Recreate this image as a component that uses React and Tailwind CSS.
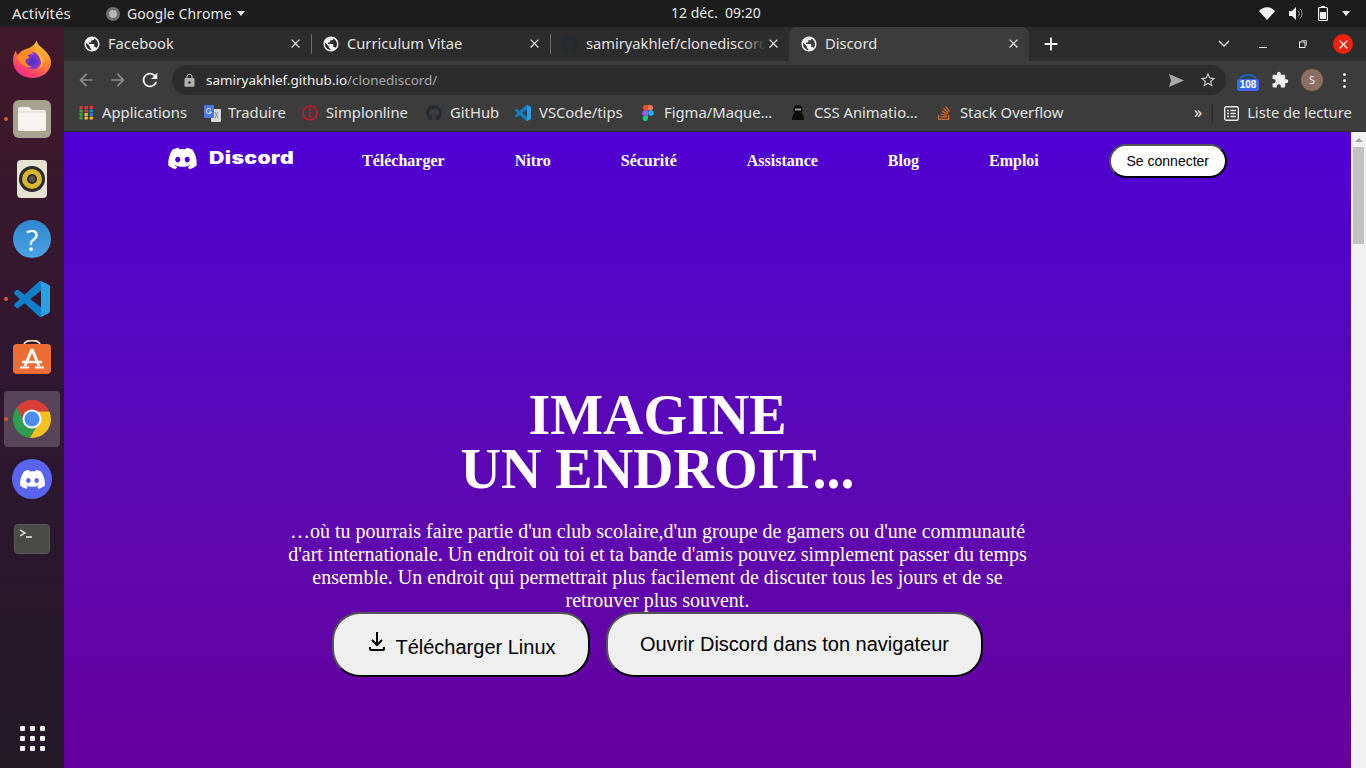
import React from 'react';
import { FaDiscord, FaGithub, FaStackOverflow } from 'react-icons/fa';
import { MdPublic, MdLock, MdStarBorder, MdClose, MdAdd, MdArrowBack, MdArrowForward, MdRefresh, MdExtension } from 'react-icons/md';

const vsCodePath = 'M23.15 2.587L18.21.21a1.494 1.494 0 0 0-1.705.29l-9.46 8.63-4.12-3.128a.999.999 0 0 0-1.276.057L.327 7.261A1 1 0 0 0 .326 8.74L3.899 12 .326 15.26a1 1 0 0 0 .001 1.479L1.65 17.94a.999.999 0 0 0 1.276.057l4.12-3.128 9.46 8.63a1.492 1.492 0 0 0 1.704.29l4.942-2.377A1.5 1.5 0 0 0 24 20.06V3.939a1.5 1.5 0 0 0-.85-1.352zm-5.146 14.861L10.826 12l7.178-5.448v10.896z';

const VsCode = ({ size }) => (
    <svg width={size} height={size} viewBox="0 0 24 24">
        <path d={vsCodePath} fill="#0f7fc8" />
        <path d="M18 0l5.15 2.587A1.5 1.5 0 0 1 24 3.939V20.06a1.5 1.5 0 0 1-.85 1.352L18 24z" fill="#2a9fe6" />
    </svg>
);

const ChromeLogo = ({ size }) => (
    <svg width={size} height={size} viewBox="4 4 40 40">
        <defs>
            <clipPath id="chromeClip">
                <circle cx="24" cy="24" r="20" />
            </clipPath>
        </defs>
        <g clipPath="url(#chromeClip)">
            <polygon points="48,16 48,-5 -5,-5 7,10.7 17,28 24,16" fill="#d93f35" />
            <polygon points="48,16 48,50 18,50 31,28 24,16" fill="#f5c021" />
            <polygon points="17,28 7,10.7 -5,-5 -5,50 18,50 31,28" fill="#2f9e50" />
        </g>
        <circle cx="24" cy="24" r="10" fill="#fff" />
        <circle cx="24" cy="24" r="8" fill="#4a8cf0" />
    </svg>
);

const FirefoxLogo = () => (
    <svg width="38" height="38" viewBox="0 0 48 48">
        <defs>
            <linearGradient id="ffBase" x1="0.8" y1="0" x2="0.2" y2="1">
                <stop offset="0" stopColor="#ffd53d" />
                <stop offset="0.4" stopColor="#ff8a2b" />
                <stop offset="0.8" stopColor="#ff3d6e" />
                <stop offset="1" stopColor="#e6279a" />
            </linearGradient>
            <radialGradient id="ffGlobe" cx="0.5" cy="0.55" r="0.6">
                <stop offset="0" stopColor="#4a2fc4" />
                <stop offset="1" stopColor="#a23ad0" />
            </radialGradient>
        </defs>
        <path d="M30 0c0 6 5 8 10 13 5 5 8 10 8 15 0 11-10 20-24 20C10 48 0 38 0 26c0-6 2-10 4-13 0 3 1 5 2 6 2-4 6-6 9-7 6-2 13-5 15-12z" fill="url(#ffBase)" />
        <circle cx="25" cy="26" r="11" fill="url(#ffGlobe)" />
        <path d="M26 13c7 0 13 6 13 13s-5 10-7 10c3-2 4-6 3-9-1-6-5-10-9-14z" fill="#ffb02e" />
        <path d="M5 22c2-5 7-8 12-8 4 0 7 1 9 4-4-1-6 0-8 2 2 1 3 2 2 3-3 1-5 1-4 4 1 4 5 7 10 7-9 2-17-3-21-12z" fill="#ff8c24" />
    </svg>
);

const FilesIcon = () => (
    <div className="w-[38px] h-[38px] rounded-md bg-[#a8a290] flex items-center justify-center">
        <svg width="28" height="24" viewBox="0 0 28 24">
            <path d="M2 0h9l3 3h12a2 2 0 0 1 2 2v17a2 2 0 0 1-2 2H2a2 2 0 0 1-2-2V2a2 2 0 0 1 2-2z" fill="#f6f5f0" />
            <path d="M0 5h28" stroke="#d8d5ca" strokeWidth="1" />
        </svg>
    </div>
);

const RhythmboxIcon = () => (
    <div className="w-[30px] h-[38px] rounded bg-[#e6e1d2] flex items-center justify-center">
        <svg width="28" height="28" viewBox="0 0 28 28">
            <circle cx="14" cy="14" r="13" fill="#2a2a28" />
            <circle cx="14" cy="14" r="10" fill="#d9b62c" />
            <circle cx="14" cy="14" r="5" fill="#2a2a28" />
            <circle cx="14" cy="14" r="3" fill="#57544a" />
        </svg>
    </div>
);

const HelpIcon = () => (
    <div className="w-[38px] h-[38px] rounded-full bg-gradient-to-b from-[#2f86d0] to-[#4aa3e2] flex items-center justify-center text-white text-[29px] font-['Open_Sans'] font-normal leading-none">
        ?
    </div>
);

const SoftwareIcon = () => (
    <svg width="38" height="38" viewBox="0 0 38 38">
        <path d="M11 5c0-6 16-6 16 0" fill="none" stroke="#f0e0c8" strokeWidth="1.800" />
        <rect x="0" y="4" width="38" height="30" rx="4" fill="#ed6d35" />
        <path d="M19 9l-7 17M19 9l7 17" stroke="#fff" strokeWidth="3" fill="none" />
        <path d="M9 22h20" stroke="#fff" strokeWidth="2.400" />
        <path d="M7 27.500h9M22 27.500h9" stroke="#fff" strokeWidth="2" />
    </svg>
);

const TerminalIcon = () => (
    <div className="w-9 h-[30px] rounded bg-[#4a4a48] border border-[#5a5a58]">
        <svg width="34" height="28" viewBox="0 0 34 28">
            <path d="M5 5l5 3-5 3" fill="none" stroke="#fff" strokeWidth="1.400" />
            <path d="M11 12h6" stroke="#fff" strokeWidth="1.400" />
        </svg>
    </div>
);

const AppsGrid = () => (
    <div className="grid grid-cols-3 gap-[5px] w-fit">
        {Array.from({ length: 9 }).map((_, i) => (
            <div key={i} className="w-[5px] h-[5px] rounded-[1px] bg-[#f2f2f2]" />
        ))}
    </div>
);

const GoogleApps = () => (
    <svg width="14" height="14" viewBox="0 0 13 13">
        {[
            ['#e53935', '#e53935', '#e53935'],
            ['#43a047', '#e53935', '#1e88e5'],
            ['#43a047', '#fbc02d', '#1e88e5'],
            ['#43a047', '#fbc02d', '#fbc02d'],
        ].map((row, y) =>
            row.map((c, x) => <rect key={`${x}-${y}`} x={x * 4.7 + 0.5} y={y * 3.3} width="3" height="2.6" fill={c} />)
        )}
    </svg>
);

const TranslateIcon = () => (
    <svg width="17" height="17" viewBox="0 0 17 17">
        <rect x="7" y="4" width="10" height="13" rx="1" fill="#d9d9d9" />
        <path d="M11 7l3 6M14 7l-3 6" stroke="#8a8a8a" strokeWidth="1" />
        <rect x="0" y="0" width="10" height="13" rx="1" fill="#4a78e8" />
        <path d="M7 4.500a2.600 2.600 0 1 0 .4 2.500H5" fill="none" stroke="#fff" strokeWidth="1" />
    </svg>
);

const SimplonIcon = () => (
    <svg width="16" height="16" viewBox="0 0 16 16">
        <circle cx="8" cy="8" r="7" fill="none" stroke="#d3162f" strokeWidth="1.600" />
        <rect x="7" y="3.500" width="2" height="2" fill="#d3162f" />
        <rect x="7" y="7" width="2" height="2" fill="#d3162f" />
        <rect x="7" y="10.500" width="2" height="2" fill="#d3162f" />
    </svg>
);

const FigmaIcon = () => (
    <svg width="12" height="16" viewBox="0 0 12 16">
        <path d="M6 0H3a2.700 2.700 0 0 0 0 5.300h3z" fill="#f24e1e" />
        <path d="M6 0h3a2.700 2.700 0 0 1 0 5.300H6z" fill="#ff7262" />
        <path d="M6 5.300H3a2.700 2.700 0 0 0 0 5.400h3z" fill="#a259ff" />
        <circle cx="9" cy="8" r="2.700" fill="#1abcfe" />
        <path d="M3 10.700h3v2.600A2.700 2.700 0 1 1 3 10.700z" fill="#0acf83" />
    </svg>
);

const CssIcon = () => (
    <svg width="16" height="18" viewBox="0 0 16 18">
        <path d="M8 1a4.500 4.500 0 0 1 3 8c2 1 3 4 3 7H2c0-3 1-6 3-7a4.500 4.500 0 0 1 3-8z" fill="#0c0c0c" />
        <rect x="5" y="4.500" width="6" height="2" fill="#9a9a9a" />
    </svg>
);

const ListIcon = () => (
    <svg width="15" height="15" viewBox="0 0 15 15">
        <rect x="0.700" y="0.700" width="13.600" height="13.600" rx="1.500" fill="none" stroke="#e8e8e8" strokeWidth="1.400" />
        <path d="M3 4.500h2M6.500 4.500H12M3 7.500h2M6.500 7.500H12M3 10.500h2M6.500 10.500H12" stroke="#e8e8e8" strokeWidth="1.400" />
    </svg>
);

const DownloadIcon = () => (
    <svg width="16" height="20" viewBox="0 0 16 20" fill="none" stroke="#000" strokeWidth="2">
        <path d="M8 0v13M3 8l5 5 5-5" />
        <path d="M1 15v2a1 1 0 0 0 1 1h12a1 1 0 0 0 1-1v-2" />
    </svg>
);

const dockItems = [
    { icon: <FirefoxLogo /> },
    { icon: <FilesIcon />, running: true },
    { icon: <RhythmboxIcon /> },
    { icon: <HelpIcon /> },
    { icon: <VsCode size={36} />, running: true },
    { icon: <SoftwareIcon /> },
    { icon: <ChromeLogo size={38} />, running: true, active: true },
    {
        icon: (
            <div className="w-10 h-10 rounded-full bg-[#5865f2] flex items-center justify-center">
                <FaDiscord size={27} color="#fff" />
            </div>
        ),
    },
    { icon: <TerminalIcon /> },
];

const Dock = () => (
    <aside className="w-16 shrink-0 flex flex-col items-center pt-[2px] pb-[17px] bg-gradient-to-b from-[#41192a] via-[#2f1630] to-[#231a26]">
        {dockItems.map((item, i) => (
            <div key={i} className="relative w-16 h-[60px] flex items-center justify-center">
                {item.active && <div className="absolute left-1 top-[2px] w-14 h-14 rounded bg-white/20" />}
                {item.running && <div className="absolute left-[4px] top-[28px] w-1 h-1 rounded-full bg-[#e95420]" />}
                <div className="relative">{item.icon}</div>
            </div>
        ))}
        <div className="mt-auto">
            <AppsGrid />
        </div>
    </aside>
);

const TopBar = () => (
    <header className="relative h-[27px] shrink-0 bg-[#1c1c1c] text-[#e6e6e6] text-[14px] flex items-center font-['Noto_Sans']">
        <span className="ml-3 w-[94px] text-[15px]">Activités</span>
        <div className="w-[14px] h-[14px] rounded-full bg-[#b5b5b5] border-[3px] border-[#6e6e6e]" />
        <span className="ml-[7px] tracking-[0.1px]">Google Chrome</span>
        <div className="ml-[5px] w-0 h-0 border-x-[4.5px] border-x-transparent border-t-[5px] border-t-[#e6e6e6]" />
        <span className="absolute left-[671px] top-[2px] whitespace-pre text-[14px]">12 déc.  09:20</span>
        <div className="ml-auto mr-[16px] flex items-center">
            <svg width="16" height="13" viewBox="0 0 16 13">
                <path d="M8 13L0 4c4.500-5 11.500-5 16 0z" fill="#f2f2f2" />
            </svg>
            <svg className="ml-[14px]" width="15" height="13" viewBox="0 0 15 13">
                <path d="M0 4h3l4-4v13l-4-4H0z" fill="#f2f2f2" />
                <path d="M9 3.500a4 4 0 0 1 0 6M11 1.500a7 7 0 0 1 0 10" fill="none" stroke="#9a9a9a" strokeWidth="1" />
            </svg>
            <svg className="ml-[14px]" width="10" height="15" viewBox="0 0 10 15">
                <rect x="3" y="0" width="4" height="2" fill="#f2f2f2" />
                <rect x="0.600" y="1.500" width="8.800" height="13" rx="1" fill="none" stroke="#f2f2f2" strokeWidth="1.200" />
                <rect x="2" y="6" width="6" height="7" fill="#f2f2f2" />
            </svg>
            <div className="ml-[14px] w-0 h-0 border-x-[4.5px] border-x-transparent border-t-[5px] border-t-[#f2f2f2]" />
        </div>
    </header>
);

const tabs = [
    { title: 'Facebook' },
    { title: 'Curriculum Vitae' },
    { title: 'samiryakhlef/clonediscord', github: true },
];

const TabClose = () => <MdClose size={15} color="#e6e6e6" className="shrink-0" />;

const TabStrip = () => (
    <div className="h-[34px] shrink-0 bg-[#2c2c2c] flex pl-2 font-['Noto_Sans'] text-[14.7px] text-[#e2e2e2]">
        {tabs.map((tab, i) => (
            <div key={tab.title} className="relative w-[239px] h-[34px] flex items-center pb-[1px] pl-[12px] pr-[8px]">
                {tab.github ? (
                    <FaGithub size={16} color="#232a31" className="shrink-0 mr-[8px]" />
                ) : (
                    <MdPublic size={18} color="#f2f2f2" className="shrink-0 -ml-px mr-[7px]" />
                )}
                <span className="flex-1 overflow-hidden whitespace-nowrap">{tab.title}</span>
                <TabClose />
                {tab.github && <div className="absolute right-[23px] top-0 w-[24px] h-full bg-gradient-to-r from-transparent to-[#2c2c2c]" />}
                {i < 2 && <div className="absolute right-[-1px] top-[7px] w-px h-[20px] bg-[#6a6a6a]" />}
            </div>
        ))}
        <div className="w-[240px] h-[38px] rounded-t-lg bg-[#3c3c3c] flex items-center pb-[5px] pl-[12px] pr-[8px]">
            <MdPublic size={18} color="#f2f2f2" className="shrink-0 -ml-px mr-[7px]" />
            <span className="flex-1">Discord</span>
            <TabClose />
        </div>
        <MdAdd size={22} color="#f2f2f2" className="ml-[11px] mt-[6px]" />
        <div className="ml-auto mr-[13px] flex items-center">
            <svg width="12" height="8" viewBox="0 0 12 8">
                <path d="M1 1l5 5 5-5" fill="none" stroke="#e0e0e0" strokeWidth="1.500" />
            </svg>
            <div className="ml-[29px] w-2 h-px bg-[#f0f0f0] mt-[6px]" />
            <svg className="ml-[32px]" width="8" height="8" viewBox="0 0 8 8">
                <rect x="0.500" y="2" width="5.500" height="5.500" fill="none" stroke="#f0f0f0" />
                <path d="M2.500 0.500h5v5" fill="none" stroke="#b0b0b0" />
            </svg>
            <div className="ml-[26px] w-5 h-5 rounded-full bg-[#f2200d] flex items-center justify-center">
                <MdClose size={15} color="#fff" />
            </div>
        </div>
    </div>
);

const Toolbar = () => (
    <div className="h-[34px] shrink-0 bg-[#3c3c3c] flex items-center pt-[4px] font-['Noto_Sans']">
        <MdArrowBack size={20} color="#8c8c8c" className="ml-[12px]" />
        <MdArrowForward size={20} color="#8c8c8c" className="ml-[12px]" />
        <MdRefresh size={22} color="#f0f0f0" className="ml-[11px]" />
        <div className="ml-[11px] w-[1054px] h-[30px] rounded-full bg-[#2c2c2c] flex items-center pl-[10px] pr-[9px] text-[13.45px]">
            <MdLock size={15} color="#b0b0b0" />
            <span className="ml-[9px] text-[#f0f0f0]">samiryakhlef.github.io</span>
            <span className="text-[#a8a8a8]">/clonediscord/</span>
            <svg className="ml-auto" width="15" height="13" viewBox="0 0 15 13">
                <path d="M0 0l15 6.500L0 13l2-6.500z" fill="#a8a8a8" />
            </svg>
            <MdStarBorder size={18} color="#c8c8c8" className="ml-[15px]" />
        </div>
        <div className="relative ml-[12px] w-5 h-5">
            <svg width="20" height="16" viewBox="0 0 20 16">
                <path d="M5 11a8 8 0 0 1 10 0M8 13a4 4 0 0 1 4 0" fill="none" stroke="#1565c0" strokeWidth="2" />
                <path d="M2 8a12 12 0 0 1 16 0" fill="none" stroke="#1565c0" strokeWidth="2" />
            </svg>
            <div className="absolute left-[-1px] top-[9px] w-[22px] h-3 rounded-[2px] bg-[#3f68e8] text-white text-[10px] leading-3 font-bold text-center font-['Liberation_Sans']">
                108
            </div>
        </div>
        <MdExtension size={18} color="#f0f0f0" className="ml-[13px]" />
        <div className="ml-[12px] w-[22px] h-[22px] rounded-full bg-[#8d6e63] text-[#f0e6e2] text-[11px] flex items-center justify-center">
            S
        </div>
        <div className="ml-[20px] flex flex-col gap-[3px]">
            <div className="w-[3px] h-[3px] rounded-full bg-[#e8e8e8]" />
            <div className="w-[3px] h-[3px] rounded-full bg-[#e8e8e8]" />
            <div className="w-[3px] h-[3px] rounded-full bg-[#e8e8e8]" />
        </div>
    </div>
);

const bookmarks = [
    { label: 'Applications', icon: <GoogleApps />, width: 'w-[125px]', gap: 'gap-[9px]' },
    { label: 'Traduire', icon: <TranslateIcon />, width: 'w-[98px]', gap: 'gap-[7px]' },
    { label: 'Simplonline', icon: <SimplonIcon />, width: 'w-[124px]', gap: 'gap-[8px]' },
    { label: 'GitHub', icon: <FaGithub size={16} color="#232a31" />, width: 'w-[89px]', gap: 'gap-[8px]' },
    { label: 'VSCode/tips', icon: <VsCode size={16} />, width: 'w-[127px]', gap: 'gap-[8px]' },
    { label: 'Figma/Maque…', icon: <FigmaIcon />, width: 'w-[148px]', gap: 'gap-[10px]' },
    { label: 'CSS Animatio…', icon: <CssIcon />, width: 'w-[146px]', gap: 'gap-[8px]' },
    { label: 'Stack Overflow', icon: <FaStackOverflow size={16} color="#d9661f" />, width: 'w-[258px]', gap: 'gap-[8px]' },
];

const BookmarksBar = () => (
    <div className="h-[37px] shrink-0 bg-[#3c3c3c] flex items-center pl-[15px] font-['Noto_Sans'] text-[14.8px] text-[#e2e2e2] border-b border-[#2a2a2a]">
        {bookmarks.map((b) => (
            <div key={b.label} className={`${b.width} ${b.gap} flex items-center shrink-0 whitespace-nowrap`}>
                {b.icon}
                <span className="-mt-[2px]">{b.label}</span>
            </div>
        ))}
        <span className="text-[16px] leading-none -mt-[3px] text-[#f0f0f0]">»</span>
        <div className="ml-[10px] w-px h-[18px] bg-[#222]" />
        <div className="ml-[11px] flex items-center gap-[8px] whitespace-nowrap">
            <ListIcon />
            <span className="-mt-[2px] tracking-[-0.05px]">Liste de lecture</span>
        </div>
    </div>
);

const navLinks = ['Télécharger', 'Nitro', 'Sécurité', 'Assistance', 'Blog', 'Emploi'];

const Scrollbar = () => (
    <div className="w-[15px] shrink-0 bg-[#f1f1f1] flex flex-col items-center pt-[6px]">
        <div className="w-0 h-0 border-x-[4px] border-x-transparent border-b-[4px] border-b-[#a3a3a3]" />
        <div className="mt-[5px] w-[11px] h-[97px] bg-[#c1c1c1]" />
    </div>
);

const DiscordPage = () => (
    <main className="flex-1 bg-gradient-to-b from-[#4f00d2] to-[#66009c] font-['Liberation_Serif'] text-white">
        <nav className="flex items-center h-[34px] mt-[12px] pl-[104px]">
            <div className="flex items-center w-[130px]">
                <FaDiscord size={31} color="#fff" className="-ml-px -mt-[5px]" />
                <span className="ml-[11px] -mt-[5px] text-[17px] font-black font-['Inter'] leading-none origin-left scale-x-125 tracking-[0.3px]">Discord</span>
            </div>
            <div className="ml-[64px] flex items-center gap-[70px] font-bold text-[16px]">
                {navLinks.map((link) => (
                    <span key={link}>{link}</span>
                ))}
            </div>
            <button className="ml-[70px] w-[118px] h-[34px] rounded-[20px] bg-white border-2 border-black [border-style:outset] text-black text-[14px] font-['Liberation_Sans']">
                Se connecter
            </button>
        </nav>
        <section className="flex flex-col items-center mt-[210px] pr-[100px]">
            <h1 className="text-[56px] leading-[54px] font-bold text-center">
                IMAGINE
                <br />
                UN ENDROIT...
            </h1>
            <p className="mt-[24px] text-[20px] leading-[23px] text-center">
                …où tu pourrais faire partie d'un club scolaire,d'un groupe de gamers ou d'une communauté
                <br />
                d'art internationale. Un endroit où toi et ta bande d'amis pouvez simplement passer du temps
                <br />
                ensemble. Un endroit qui permettrait plus facilement de discuter tous les jours et de se
                <br />
                retrouver plus souvent.
            </p>
            <div className="flex gap-4 font-['Liberation_Sans'] text-black text-[20px]">
                <button className="w-[258px] h-[65px] rounded-[28px] bg-[#efefef] border-2 border-black [border-style:outset] flex items-center justify-center gap-[10px] pl-[3px]">
                    <span className="-mt-[6px]"><DownloadIcon /></span>
                    <span className="mt-[5px]">Télécharger Linux</span>
                </button>
                <button className="w-[377px] h-[65px] rounded-[28px] bg-[#efefef] border-2 border-black [border-style:outset] pb-[2px]">
                    Ouvrir Discord dans ton navigateur
                </button>
            </div>
        </section>
    </main>
);

export default function App() {
    return (
        <div className="w-[1366px] h-[768px] overflow-hidden flex flex-col">
            <TopBar />
            <div className="flex-1 flex min-h-0">
                <Dock />
                <div className="flex-1 flex flex-col min-w-0">
                    <TabStrip />
                    <Toolbar />
                    <BookmarksBar />
                    <div className="flex-1 flex min-h-0">
                        <DiscordPage />
                        <Scrollbar />
                    </div>
                </div>
            </div>
        </div>
    );
}
